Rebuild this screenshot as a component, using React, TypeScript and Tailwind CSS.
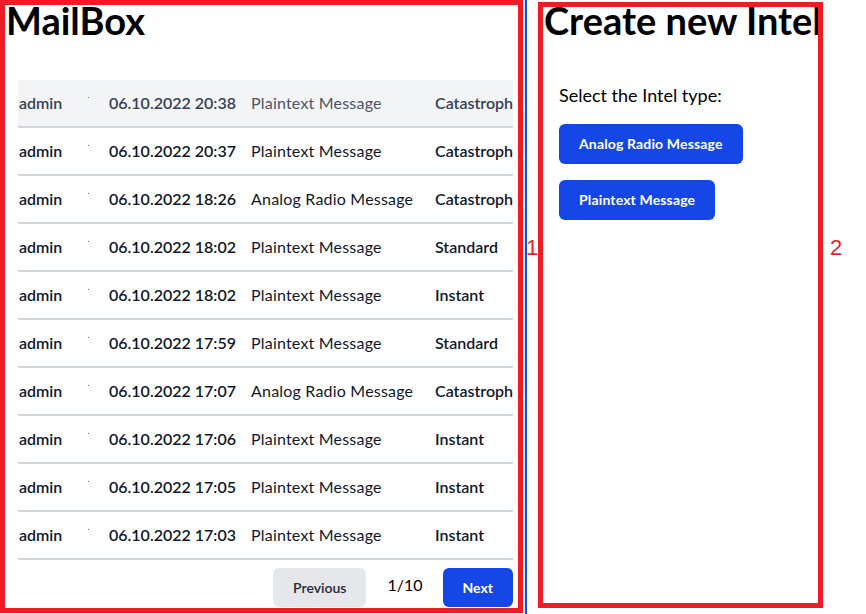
import React from "react";

const rows = [
  { user: "admin", date: "06.10.2022 20:38", type: "Plaintext Message", prio: "Catastrophic" },
  { user: "admin", date: "06.10.2022 20:37", type: "Plaintext Message", prio: "Catastrophic" },
  { user: "admin", date: "06.10.2022 18:26", type: "Analog Radio Message", prio: "Catastrophic" },
  { user: "admin", date: "06.10.2022 18:02", type: "Plaintext Message", prio: "Standard" },
  { user: "admin", date: "06.10.2022 18:02", type: "Plaintext Message", prio: "Instant" },
  { user: "admin", date: "06.10.2022 17:59", type: "Plaintext Message", prio: "Standard" },
  { user: "admin", date: "06.10.2022 17:07", type: "Analog Radio Message", prio: "Catastrophic" },
  { user: "admin", date: "06.10.2022 17:06", type: "Plaintext Message", prio: "Instant" },
  { user: "admin", date: "06.10.2022 17:05", type: "Plaintext Message", prio: "Instant" },
  { user: "admin", date: "06.10.2022 17:03", type: "Plaintext Message", prio: "Instant" },
];

export default function App() {
  return (
    <div
      className="relative flex h-[614px] w-[866px] overflow-hidden bg-white text-black"
      style={{ fontFamily: "Lato, 'Liberation Sans', sans-serif" }}
    >
      {/* Left panel */}
      <div className="flex h-full w-[527px] shrink-0 flex-col border-r-2 border-blue-700">
        <h1 className="pl-[6px] text-[38px] font-bold leading-10">MailBox</h1>
        <div className="ml-[18px] mt-10 w-[495px] overflow-hidden">
          <div className="w-[620px]">
            {rows.map((r, i) => (
              <div
                key={i}
                className={`grid h-12 grid-cols-[70px_20px_143px_184px_1fr] items-center border-b-2 border-gray-300 text-base leading-6 ${
                  i === 0 ? "bg-gray-100 text-gray-700" : "text-gray-900"
                }`}
              >
                <div className="pl-px font-semibold">{r.user}</div>
                <div className="relative h-full">
                  <span className="absolute left-0 top-[17px] h-px w-px bg-gray-500" />
                </div>
                <div className="pl-px font-semibold">{r.date}</div>
                <div className={`tracking-[0.2px] ${i === 0 ? "text-gray-600" : ""}`}>{r.type}</div>
                <div className="whitespace-nowrap font-semibold">{r.prio}</div>
              </div>
            ))}
          </div>
        </div>
        <div className="mt-2 flex w-[513px] items-center justify-end gap-5">
          <button className="mr-px h-[39px] rounded-md bg-gray-200 px-5 text-sm font-semibold text-gray-800">
            Previous
          </button>
          <span className="-mt-1.5 text-base">1/10</span>
          <button className="h-[39px] rounded-md bg-blue-700 px-5 text-sm font-bold text-white">
            Next
          </button>
        </div>
      </div>

      {/* Right panel */}
      <div className="flex flex-col pl-[17px]">
        <h1 className="whitespace-nowrap text-[38px] font-bold leading-10">Create new Intel</h1>
        <div className="mt-[41px] flex flex-col items-start pl-[15px]">
          <p className="text-lg leading-7">Select the Intel type:</p>
          <div className="mt-[15px] flex flex-col items-start gap-4">
            <button className="h-10 rounded-md bg-blue-700 px-5 text-sm font-bold tracking-[0.15px] text-white">
              Analog Radio Message
            </button>
            <button className="h-10 rounded-md bg-blue-700 px-5 text-sm font-bold tracking-[0.15px] text-white">
              Plaintext Message
            </button>
          </div>
        </div>
      </div>

      {/* Annotation overlays */}
      <div className="pointer-events-none absolute left-0 top-0 h-[613px] w-[523px] border-[5px] border-[#ee1c25]" />
      <div className="pointer-events-none absolute left-[538px] top-[2px] h-[606px] w-[285px] border-[5px] border-[#ee1c25]" />
      <span
        className="absolute left-[526px] top-[236px] text-[22px] leading-6 text-[#ee1c25]"
        style={{ fontFamily: "'Liberation Sans', sans-serif" }}
      >
        1
      </span>
      <span
        className="absolute left-[830px] top-[236px] text-[22px] leading-6 text-[#ee1c25]"
        style={{ fontFamily: "'Liberation Sans', sans-serif" }}
      >
        2
      </span>
    </div>
  );
}
